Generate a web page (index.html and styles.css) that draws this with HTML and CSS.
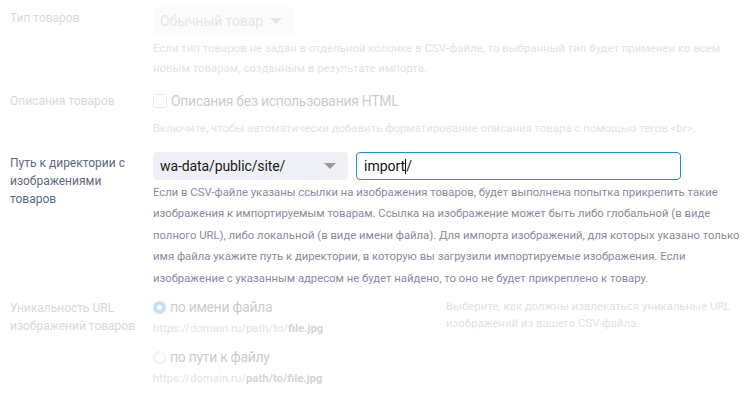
FILE: index.html
```html
<!DOCTYPE html>
<html lang="ru">
<head>
  <meta charset="UTF-8">
  <title>Импорт товаров</title>
  <link rel="stylesheet" href="styles.css">
</head>
<body>
  <div class="fields">

    <div class="field faded">
      <div class="field-name">Тип товаров</div>
      <div class="field-value">
        <div class="select small">Обычный товар <span class="caret"></span></div>
        <p class="hint">Если тип товаров не задан в отдельной колонке в CSV-файле, то выбранный тип будет применен ко всем новым товарам, созданным в результате импорта.</p>
      </div>
    </div>

    <div class="field faded descr">
      <div class="field-name">Описания товаров</div>
      <div class="field-value">
        <label class="check"><span class="box"></span>Описания без использования HTML</label>
        <p class="hint">Включите, чтобы автоматически добавить форматирование описания товара с помощью тегов &lt;br&gt;.</p>
      </div>
    </div>

    <div class="field path">
      <div class="field-name">Путь к директории с изображениями товаров</div>
      <div class="field-value">
        <div class="path-row">
          <div class="select wide">wa-data/public/site/ <span class="caret"></span></div>
          <div class="input">import<span class="cursor"></span>/</div>
        </div>
        <p class="hint long">Если в CSV-файле указаны ссылки на изображения товаров, будет выполнена попытка прикрепить такие изображения к импортируемым товарам. Ссылка на изображение может быть либо глобальной (в виде полного URL), либо локальной (в виде имени файла). Для импорта изображений, для которых указано только имя файла укажите путь к директории, в которую вы загрузили импортируемые изображения. Если изображение с указанным адресом не будет найдено, то оно не будет прикреплено к товару.</p>
      </div>
    </div>

    <div class="field faded">
      <div class="field-name">Уникальность URL изображений товаров</div>
      <div class="field-value radios">
        <label class="radio"><span class="dot on"></span>по имени файла</label>
        <div class="example">https://domain.ru/path/to/<b>file.jpg</b></div>
        <label class="radio"><span class="dot"></span>по пути к файлу</label>
        <div class="example">https://domain.ru/<b>path/to/file.jpg</b></div>
      </div>
      <p class="hint side">Выберите, как должны извлекаться уникальные URL изображений из вашего CSV-файла.</p>
    </div>

  </div>
</body>
</html>
```

FILE: styles.css
```css
body {
  margin: 0;
  background: #fff;
  font-family: Roboto, "Noto Sans", sans-serif;
  color: #1a1a1a;
}

.fields {
  padding: 7px 10px 0 10px;
}

.field {
  display: flex;
  margin-bottom: 12px;
}

.field.descr {
  margin-bottom: 14px;
}

.field.path {
  margin-bottom: 8px;
}

.field.faded {
  opacity: 0.25;
}

.field-name {
  width: 143px;
  flex-shrink: 0;
  padding-top: 2px;
  padding-right: 10px;
  box-sizing: border-box;
  font-size: 12px;
  line-height: 18px;
  color: #5b6b82;
}

.field-value {
  flex: 1;
}

.select {
  display: inline-flex;
  align-items: center;
  justify-content: space-between;
  height: 28px;
  padding: 0 12px 0 7px;
  box-sizing: border-box;
  background: #eff0f5;
  border-radius: 4px;
  font-size: 14px;
  letter-spacing: -0.1px;
  white-space: nowrap;
  color: #1a1a1a;
}

.select.small {
  width: 141px;
  color: #999;
}

.select.wide {
  width: 195px;
}

.caret {
  width: 0;
  height: 0;
  border-left: 6px solid transparent;
  border-right: 6px solid transparent;
  border-top: 6px solid #999;
}

.hint {
  margin: 0;
  padding-top: 3px;
  font-size: 11.4px;
  line-height: 20px;
  color: #8b8a9e;
}

.hint.long {
  font-size: 11.3px;
  line-height: 21.4px;
  padding-top: 2px;
}

.check, .radio {
  display: flex;
  align-items: center;
  font-size: 14px;
  letter-spacing: -0.3px;
  color: #333;
}

.check {
  line-height: 22px;
  margin-bottom: 3px;
}

.radio {
  line-height: 20px;
}

.box {
  width: 12px;
  height: 12px;
  border: 1px solid #aaa;
  border-radius: 3px;
  margin-right: 4px;
}

.path-row {
  display: flex;
  gap: 8px;
}

.input {
  width: 325px;
  height: 28px;
  box-sizing: border-box;
  border: 1px solid #1e8af0;
  border-radius: 4px;
  padding: 0 7px;
  font-size: 14px;
  line-height: 26px;
  color: #111;
}

.cursor {
  display: inline-block;
  width: 1px;
  height: 15px;
  background: #111;
  vertical-align: -3px;
}

.radios {
  flex: 0 0 293px;
}

.dot {
  width: 9px;
  height: 9px;
  border: 2px solid #ccc;
  border-radius: 50%;
  margin-right: 4px;
  background: #fff;
}

.dot.on {
  border: 4px solid #1a8cf0;
  width: 5px;
  height: 5px;
}

.example {
  font-size: 11.4px;
  line-height: 18px;
  margin: 2px 0 10px;
  color: #8b8a9e;
}

.example b {
  color: #555;
}

.hint.side {
  flex: 1;
  padding-top: 1px;
  line-height: 17px;
}
```
